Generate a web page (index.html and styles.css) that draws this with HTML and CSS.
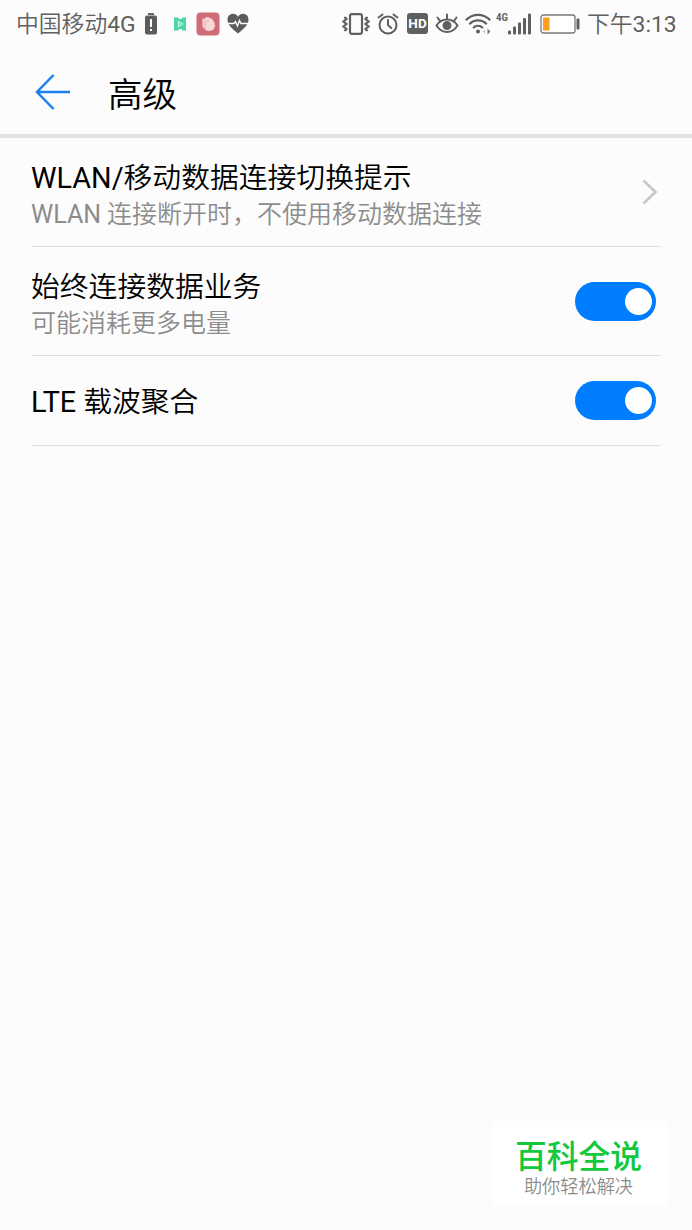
FILE: index.html
```html
<!DOCTYPE html>
<html lang="zh-CN">
<head>
<meta charset="UTF-8">
<title>高级</title>
<link rel="stylesheet" href="styles.css">
</head>
<body>
<div class="status-bar">
  <span class="carrier">中国移动<span class="latin">4G</span></span>
  <svg class="icon-low" width="14" height="22" viewBox="0 0 14 22">
    <rect x="4" y="0" width="6" height="2" fill="#666"/>
    <rect x="1" y="2.500" width="12" height="19" rx="2" fill="#5c5c5c"/>
    <path d="M7 6v8M7 16v2" stroke="#fff" stroke-width="2"/>
  </svg>
  <svg class="icon-n" width="14" height="14" viewBox="0 0 14 14">
    <path d="M1 .5h4L6.500 2h2L9.500.5H13v13H9.500L8.500 12H6.500L5 13.500H1z" fill="#4fd6a5"/>
    <path d="M5.500 4.500l4 2.500-4 2.500z" fill="none" stroke="#c8f7e4" stroke-width="1.200"/>
  </svg>
  <svg class="icon-app" width="24" height="24" viewBox="0 0 24 24">
    <rect x="0.500" y="0.500" width="23" height="23" rx="4" fill="#d16b78"/>
    <path d="M6.500 6.500l2 .5 1.500-2 3 .5 3 1.500 2.500 3.500.5 4-2 3.500-4 1-3-.5-1.500-2L6.500 15z" fill="#f6dada"/>
    <path d="M9 8v8M12 7v3" stroke="#e6a6aa" stroke-width="1"/>
  </svg>
  <svg class="icon-heart" width="22" height="21" viewBox="0 0 22 21">
    <path d="M11 20.500C5 15.500.5 12 .5 6.500.500 3 3 .8 6 .8c2 0 4 1 5 3 1-2 3-3 5-3 3 0 5.500 2.200 5.500 5.700 0 5.500-4.500 9-10.500 14z" fill="#5c5c5c"/>
    <path d="M1 10.500h6l1.500-2 2 4.500 2-5.500 1.500 3h7" fill="none" stroke="#fff" stroke-width="1.300"/>
  </svg>
  <div class="status-right">
    <svg class="icon-vibrate" width="28" height="22" viewBox="0 0 28 22" fill="none" stroke="#606060">
      <rect x="8" y="1.200" width="12" height="19.600" rx="2" stroke-width="2.200"/>
      <path d="M2.500 4l2 2-3 2.500 3 2.500-3 2.500 3 2.500-2 2M25.500 4l-2 2 3 2.500-3 2.500 3 2.500-3 2.500 2 2" stroke-width="2.200"/>
    </svg>
    <svg class="icon-alarm" width="22" height="22" viewBox="0 0 22 22" fill="none" stroke="#606060" stroke-width="2" stroke-linecap="round">
      <circle cx="11" cy="12" r="8.500"/>
      <path d="M11 7v5l3.200 3M1.500 4.500l4-3M20.500 4.500l-4-3"/>
    </svg>
    <span class="hd">HD</span>
    <svg class="icon-eye" width="24" height="22" viewBox="0 0 24 22" fill="none" stroke="#606060" stroke-width="2" stroke-linecap="round">
      <path d="M1.500 12.500C4 8.500 8 6.500 12 6.500s8 2 10.500 6c-2.500 4-6.500 6.500-10.500 6.500s-8-2.500-10.500-6.500zM12 6V1.500M5 8L2.500 4.500M19 8l2.500-3.500"/>
      <circle cx="12" cy="12.500" r="3.500" fill="#606060"/>
    </svg>
    <svg class="icon-wifi" width="26" height="22" viewBox="0 0 26 22" fill="none" stroke="#606060" stroke-width="2.200">
      <path d="M.8 7.200c7-7.200 17.400-7.200 24.400 0M4.300 11.200c5-5 12.400-5 17.400 0M8 15c3-2.800 7-2.800 10 0"/>
      <circle cx="13" cy="18.600" r="2" fill="#606060" stroke="none"/>
      <path d="M22.500 15.500l3 3-3 3z" fill="#777" stroke="none"/>
      <path d="M20 16.500l-2 2 2 2z" fill="#bbb" stroke="none"/>
    </svg>
    <span class="net">4G</span>
    <svg class="icon-signal" width="23" height="22" viewBox="0 0 23 22" fill="#606060">
      <rect x="0" y="17.500" width="3" height="4" rx="1"/>
      <rect x="5" y="13.500" width="3" height="8" rx="1"/>
      <rect x="10" y="9.500" width="3" height="12" rx="1"/>
      <rect x="15" y="5" width="3" height="16.500" rx="1"/>
      <rect x="20" y="0.500" width="3" height="21" rx="1"/>
    </svg>
    <svg class="icon-battery" width="40" height="20" viewBox="0 0 40 20">
      <rect x="1" y="1" width="34" height="18" rx="2.500" fill="#fff" stroke="#777" stroke-width="1.300"/>
      <rect x="3" y="3.500" width="6.500" height="13" fill="#fb9e1e"/>
      <rect x="36.500" y="4.500" width="3" height="11" rx="1" fill="#606060"/>
    </svg>
    <span class="time">下午<span class="latin">3:13</span></span>
  </div>
</div>

<div class="header">
  <svg class="back" width="36" height="36" viewBox="0 0 36 36" fill="none" stroke="#1b7ff0" stroke-width="2.500">
    <path d="M18.500 1L2 18l16.500 17M1.500 18H35"/>
  </svg>
  <h1>高级</h1>
</div>

<div class="list">
  <div class="row">
    <div class="text">
      <div class="title"><span class="latin">WLAN/</span>移动数据连接切换提示</div>
      <div class="sub"><span class="latin">WLAN</span> 连接断开时，不使用移动数据连接</div>
    </div>
    <svg class="arrow" width="16" height="26" viewBox="0 0 16 26" fill="none" stroke="#c6c6c6" stroke-width="2.500">
      <path d="M1.500 1.500L13.500 13l-12 11.500"/>
    </svg>
  </div>
  <div class="row">
    <div class="text">
      <div class="title">始终连接数据业务</div>
      <div class="sub">可能消耗更多电量</div>
    </div>
    <div class="switch"><div class="knob"></div></div>
  </div>
  <div class="row short">
    <div class="text">
      <div class="title"><span class="latin">LTE</span> 载波聚合</div>
    </div>
    <div class="switch"><div class="knob"></div></div>
  </div>
</div>

<div class="watermark">
  <div class="brand">百科全说</div>
  <div class="slogan">助你轻松解决</div>
</div>
</body>
</html>
```

FILE: styles.css
```css
* {
  box-sizing: border-box;
}
body {
  margin: 0;
  height: 1230px;
  background-color: #fcfcfc;
  font-family: Roboto, "Noto Sans CJK SC", sans-serif;
  font-weight: 350;
  color: #000;
  display: flex;
  flex-direction: column;
  overflow: hidden;
}
svg {
  display: block;
  flex: none;
}
.latin {
  font-weight: 400;
}
.status-bar {
  height: 47px;
  padding: 0 15px 0 16px;
  display: flex;
  align-items: center;
  color: #606060;
  font-size: 22.8px;
  line-height: 46px;
  white-space: nowrap;
}
.carrier {
  width: 128px;
  padding-top: 2px;
}
.icon-n {
  margin-left: 15px;
}
.icon-app {
  margin-left: 9px;
}
.icon-heart {
  margin-left: 7px;
}
.status-right {
  margin-left: auto;
  display: flex;
  align-items: center;
}
.icon-alarm {
  margin-left: 7px;
}
.hd {
  width: 21px;
  height: 21px;
  margin-left: 8px;
  border-radius: 3px;
  background-color: #606060;
  color: #fff;
  font-size: 13.5px;
  font-weight: 700;
  line-height: 21px;
  text-align: center;
}
.icon-eye {
  margin-left: 7px;
}
.icon-wifi {
  margin-left: 6px;
}
.net {
  width: 12px;
  height: 22px;
  margin-left: 5px;
  font-family: "Roboto Condensed", Roboto, sans-serif;
  font-size: 11px;
  line-height: 9px;
  font-weight: 600;
}
.icon-battery {
  margin-left: 9px;
}
.time {
  width: 90px;
  margin-left: 7px;
  padding-top: 2px;
}
.header {
  height: 91px;
  padding: 4px 35px 1px;
  display: flex;
  align-items: center;
  border-bottom: 4px solid #e2e2e2;
}
h1 {
  margin: 0 0 0 37px;
  padding-top: 5px;
  font-size: 34.5px;
  font-weight: 350;
  line-height: 50px;
}
.list {
  padding: 0 31px;
}
.row {
  height: 109px;
  display: flex;
  align-items: center;
  justify-content: space-between;
  border-bottom: 1px solid #e0e0e0;
}
.row .text {
  padding-top: 7px;
}
.row.short {
  height: 90px;
}
.row.short .text {
  padding-top: 3px;
}
.title {
  font-size: 28.8px;
  line-height: 38px;
}
.sub {
  color: #8c8c8c;
  font-size: 25px;
  line-height: 36px;
}
.arrow {
  margin-right: 3px;
}
.switch {
  width: 81px;
  height: 39px;
  margin-right: 5px;
  padding: 0 4px;
  border-radius: 20px;
  background-color: #007dff;
  display: flex;
  align-items: center;
  justify-content: flex-end;
}
.knob {
  width: 27px;
  height: 27px;
  border-radius: 50%;
  background-color: #fff;
}
.watermark {
  width: 174px;
  height: 84px;
  margin: auto 25px 25px auto;
  padding: 18px 3px 0 0;
  background-color: #fff;
  text-align: center;
}
.brand {
  color: #12c83c;
  font-size: 31.8px;
  font-weight: 500;
  line-height: 37px;
}
.slogan {
  color: #8c8c8c;
  font-size: 18.2px;
  line-height: 22px;
}
```
